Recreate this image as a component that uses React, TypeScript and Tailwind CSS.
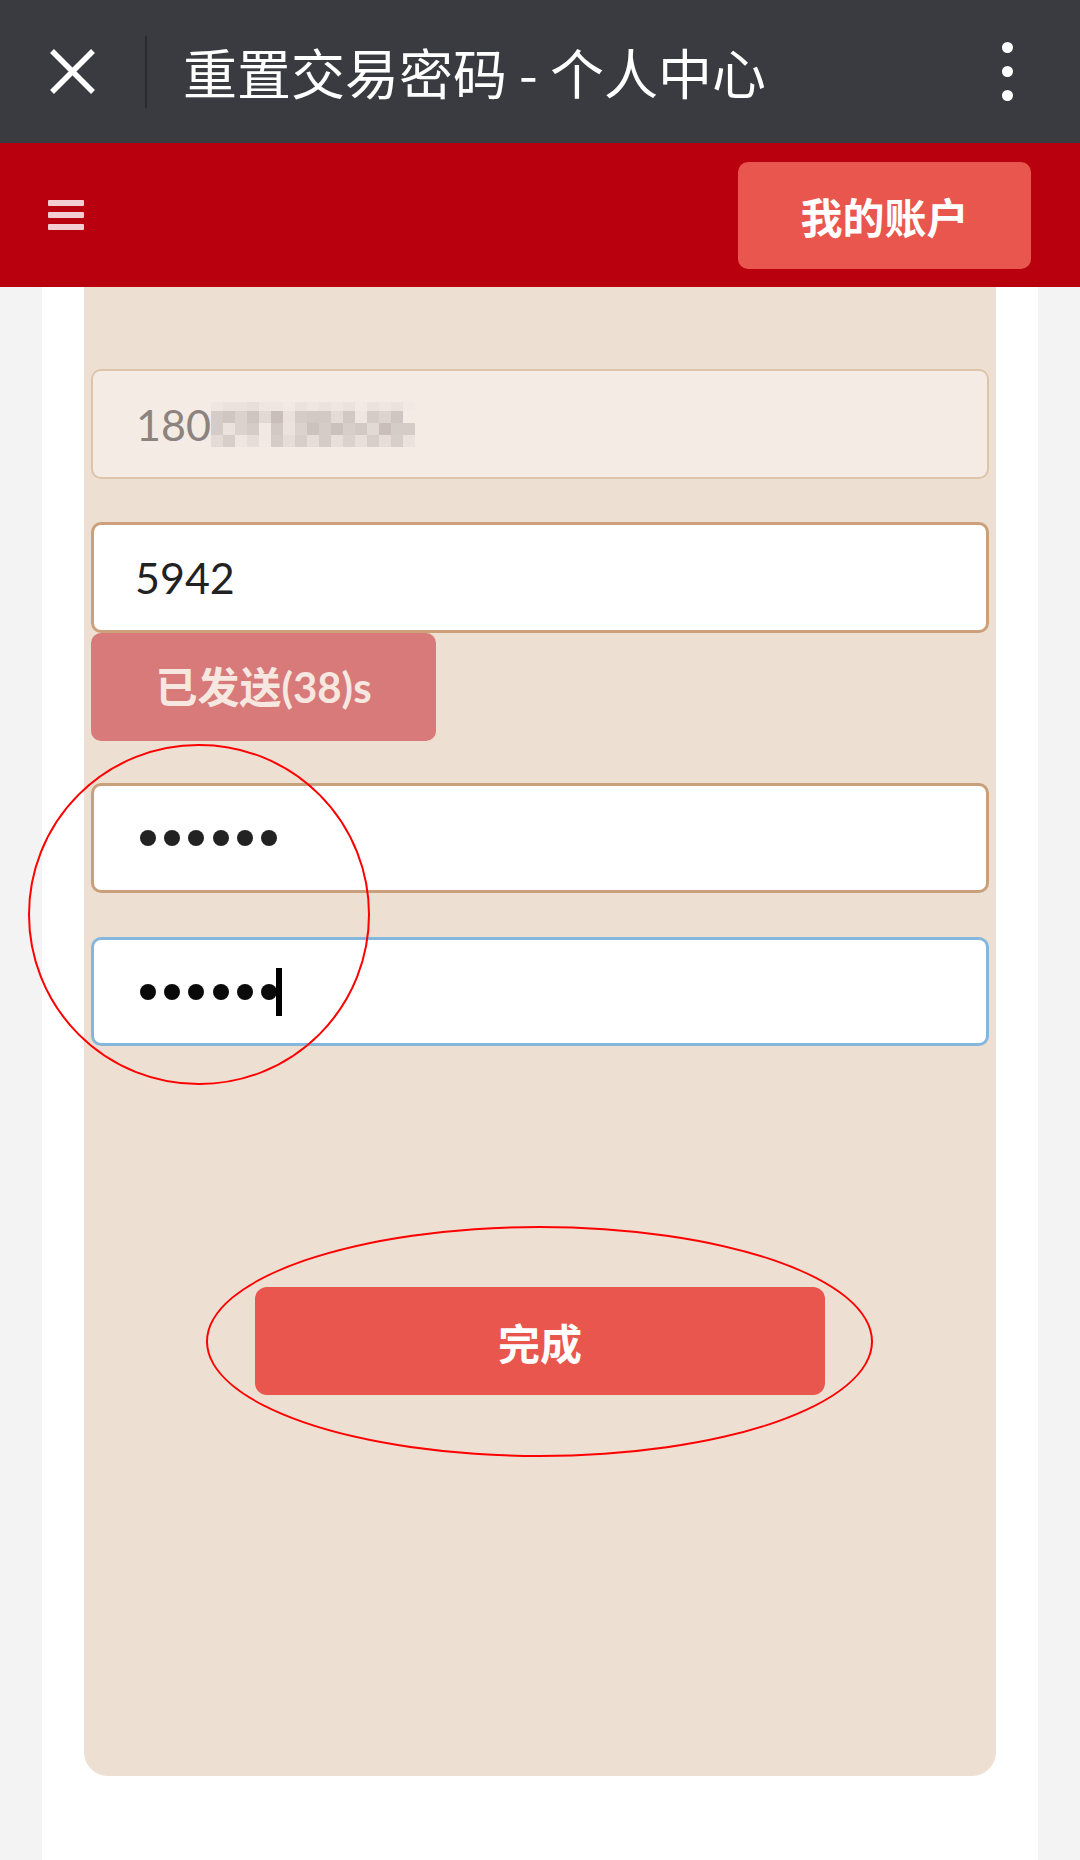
import React from 'react'

// mosaic colours for the masked phone digits, 4 rows x 17 cols of 12px blocks
const MOSAIC: string[][] = [
  ['#efe6e1', '#ebe2dd', '#ebe2dd', '#e8dfda', '#efe6e1', '#efe6e1', '#f2e9e4', '#ebe2dd', '#efe6e1', '#ebe2dd', '#efe6e1', '#ebe2dd', '#f2e9e4', '#ebe2dd', '#efe6e1', '#ebe2dd', '#f2e9e4'],
  ['#d6ccc7', '#d0c6c1', '#dcd2cd', '#cfc5c0', '#e2d9d4', '#c9beb9', '#eae1dc', '#d6ccc7', '#d3c9c4', '#d3c9c4', '#e4dbd6', '#d2c8c3', '#efe6e1', '#d6ccc7', '#ded4cf', '#d0c6c1', '#f4ebe5'],
  ['#d6ccc7', '#ebe2dd', '#dcd2cd', '#d6ccc7', '#f2e9e4', '#d3c9c4', '#ebe2dd', '#dcd2cd', '#cdc3be', '#d6ccc7', '#cbc1bc', '#d8cec9', '#d3c9c4', '#e2d9d4', '#c9beb9', '#d6ccc7', '#d6ccc7'],
  ['#e4dbd6', '#d8cec9', '#efe6e1', '#e6ddd8', '#f2e9e4', '#d6ccc7', '#e6ddd8', '#d8cec9', '#e6ddd8', '#d6ccc7', '#e8dfda', '#dcd2cd', '#e8dfda', '#d8cec9', '#e6ddd8', '#d8cec9', '#ebe2dd'],
]

function Mosaic() {
  return (
    <svg width="204" height="45" viewBox="0 0 204 45" className="block">
      {MOSAIC.map((row, r) =>
        row.map((c, i) => (
          <rect
            key={`${r}-${i}`}
            x={i * 12}
            y={r === 0 ? 0 : 9 + (r - 1) * 12}
            width="12"
            height={r === 0 ? 9 : 12}
            fill={c}
          />
        ))
      )}
    </svg>
  )
}

function Dots({ color }: { color: string }) {
  return (
    <div className="flex items-center gap-[8.2px]">
      {[0, 1, 2, 3, 4, 5].map((i) => (
        <span key={i} className={`block w-[16px] h-[16px] rounded-full ${color}`} />
      ))}
    </div>
  )
}

export default function App() {
  return (
    <div className="relative w-[1080px] h-[1860px] overflow-hidden bg-[#f3f3f3] font-['Lato','Noto_Sans_CJK_SC',sans-serif]">
      {/* Top bar */}
      <div className="h-[143px] bg-[#3a3b40] flex items-center">
        <div className="w-[145px] flex items-center">
          <svg width="47" height="47" viewBox="0 0 47 47" className="ml-[49px]">
            <path d="M3 3 L44 44 M44 3 L3 44" stroke="#fff" strokeWidth="5.5" />
          </svg>
        </div>
        <div className="w-[2px] h-[72px] bg-[#2a2b2f]" />
        <div className="ml-[36px] text-[54px] leading-none text-white font-['Noto_Sans_CJK_SC',sans-serif]">
          重置交易密码 - 个人中心
        </div>
        <div className="ml-auto mr-[67px] flex flex-col gap-[13px]">
          <span className="block w-[11px] h-[11px] rounded-full bg-white" />
          <span className="block w-[11px] h-[11px] rounded-full bg-white" />
          <span className="block w-[11px] h-[11px] rounded-full bg-white" />
        </div>
      </div>

      {/* Red nav */}
      <div className="h-[144px] bg-[#b8000f] flex items-center justify-between">
        <div className="ml-[48px] flex flex-col gap-[6px]">
          <span className="block w-[36px] h-[6px] rounded-[1px] bg-[#f2cdd2]" />
          <span className="block w-[36px] h-[6px] rounded-[1px] bg-[#f2cdd2]" />
          <span className="block w-[36px] h-[6px] rounded-[1px] bg-[#f2cdd2]" />
        </div>
        <button className="mr-[49px] w-[293px] h-[107px] rounded-[10px] bg-[#e9564d] text-white text-[42px] font-bold font-['Noto_Sans_CJK_SC',sans-serif]">
          我的账户
        </button>
      </div>

      {/* Content */}
      <div className="mx-[42px] h-[1573px] bg-white">
        <div className="mx-[42px] rounded-b-[24px] bg-[#eddfd2] px-[7px] pt-[82px] pb-[381px]">
          {/* phone */}
          <div className="h-[110px] rounded-[10px] border-2 border-[#dfc4aa] bg-[#f4ebe5] flex items-center pl-[43px]">
            <span className="text-[43px] text-[#8c837e] leading-none">180</span>
            <Mosaic />
          </div>

          {/* code */}
          <div className="mt-[43px] h-[111px] rounded-[10px] border-[3px] border-[#cba07a] bg-white flex items-center pl-[41px]">
            <span className="text-[43px] text-[#222] leading-none">5942</span>
          </div>
          <button className="block w-[345px] h-[108px] rounded-[10px] bg-[#d77a79] text-[#f6e8e0] text-[42px] font-bold">
            已发送(38)s
          </button>

          {/* new password */}
          <div className="mt-[42px] h-[110px] rounded-[10px] border-[3px] border-[#c8a17c] bg-white flex items-center pl-[46px]">
            <Dots color="bg-[#222]" />
          </div>

          {/* confirm password, focused */}
          <div className="mt-[44px] h-[109px] rounded-[10px] border-[3px] border-[#85b7dc] bg-white flex items-center pl-[46px]">
            <Dots color="bg-[#0a0a0a]" />
            <span className="block w-[6px] h-[48px] bg-black ml-[-1px]" />
          </div>

          <div className="mt-[241px] flex justify-center">
            <button className="w-[570px] h-[108px] rounded-[12px] bg-[#e9564d] text-white text-[42px] font-bold font-['Noto_Sans_CJK_SC',sans-serif]">
              完成
            </button>
          </div>
        </div>
      </div>

      {/* red annotation marks drawn over the screenshot */}
      <div className="absolute left-[28px] top-[744px] w-[342px] h-[341px] rounded-full border-2 border-[#ff0000]" />
      <div className="absolute left-[206px] top-[1226px] w-[667px] h-[231px] rounded-[50%] border-2 border-[#ff0000]" />
    </div>
  )
}
